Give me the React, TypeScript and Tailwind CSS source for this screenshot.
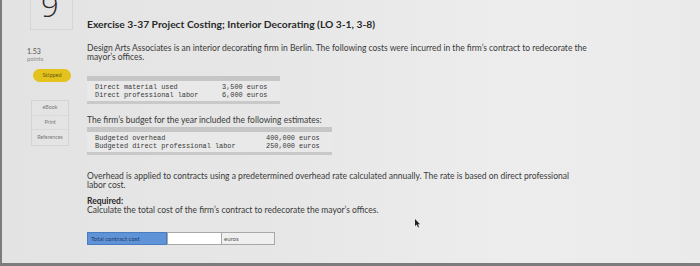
import React from "react";

const sans = { fontFamily: '"Lato", "Open Sans", sans-serif' };

function DataTable({ rows, width, numCol }: { rows: [string, string][]; width: string; numCol: string }) {
  return (
    <div className={`${width} flex flex-col`}>
      <div className="h-[5px] bg-[#c6c6c6]" />
      <div className="bg-[#e9e9e9] pt-[2px] pb-[2px] px-[8px] font-['Liberation_Mono',monospace] text-[6.9px] leading-[8px] text-[#3a3a3a]">
        {rows.map(([a, b]) => (
          <div key={a} className="flex">
            <span className="flex-1 whitespace-pre">{a}</span>
            <span className={`${numCol} whitespace-pre`}>{b}</span>
          </div>
        ))}
      </div>
      <div className="h-[3px] bg-[#c9c9c9]" />
    </div>
  );
}

export default function App() {
  return (
    <div
      className="relative w-[700px] h-[266px] overflow-hidden flex border-l-2 border-b-[3px] border-[#7c7c7c] bg-[linear-gradient(90deg,#e3e3e3_0%,#e7e7e7_40%,#ededed_75%,#eaeaea_100%)] text-[#333]"
      style={sans}
    >
      {/* Sidebar */}
      <div className="w-[85px] shrink-0 flex flex-col">
        <div className="ml-[28px] w-[43px] h-[30px] border-r border-b border-l border-[#d6d6d6] relative overflow-hidden">
          <span className="absolute left-[10px] top-[-10px] text-[31px] leading-[31px] font-light text-[#2a2a2a]" style={{ fontFamily: '"Open Sans", sans-serif' }}>9</span>
        </div>
        <div className="ml-[25px] mt-[17px] text-[7px] leading-[8px] text-[#555]">1.53</div>
        <div className="ml-[25px] text-[6px] leading-[8px] text-[#8a8a8a]">points</div>
        <div className="ml-[31px] mt-[6px] w-[38px] h-[13px] rounded-full bg-[#e4c21e] flex items-center justify-center text-[5.5px] text-[#6b5a08]">
          Skipped
        </div>
        <div className="ml-[29px] mt-[18px] w-[38px] flex flex-col border border-[#d4d4d4] text-[5.3px] text-[#7a7a7a]">
          <div className="h-[15px] flex items-center justify-center border-b border-[#d9d9d9]">eBook</div>
          <div className="h-[14px] flex items-center justify-center border-b border-[#d9d9d9]">Print</div>
          <div className="h-[15px] flex items-center justify-center">References</div>
        </div>
      </div>

      {/* Main */}
      <div className="flex flex-col pt-[17px]">
        <h1 className="text-[10.3px] leading-[14px] font-bold text-[#2a2a2a]">
          Exercise 3-37 Project Costing; Interior Decorating (LO 3-1, 3-8)
        </h1>
        <p className="mt-[13px] w-[512px] text-[8.5px] leading-[9px] text-[#3a3a3a]">
          Design Arts Associates is an interior decorating firm in Berlin. The following costs were incurred in the firm’s contract to redecorate the mayor’s offices.
        </p>
        <div className="mt-[14px]">
          <DataTable
            width="w-[193px]"
            numCol="w-[50px]"
            rows={[
              ["Direct material used", "3,500 euros"],
              ["Direct professional labor", "6,000 euros"],
            ]}
          />
        </div>
        <p className="mt-[12px] text-[8.5px] leading-[9px] text-[#3a3a3a]">
          The firm’s budget for the year included the following estimates:
        </p>
        <div className="mt-[2px]">
          <DataTable
            width="w-[245px]"
            numCol="w-[58px]"
            rows={[
              ["Budgeted overhead", "400,000 euros"],
              ["Budgeted direct professional labor", "250,000 euros"],
            ]}
          />
        </div>
        <p className="mt-[17px] w-[492px] text-[8.5px] leading-[9px] text-[#3a3a3a]">
          Overhead is applied to contracts using a predetermined overhead rate calculated annually. The rate is based on direct professional labor cost.
        </p>
        <p className="mt-[7px] text-[8.5px] leading-[9px] font-bold text-[#2a2a2a]">Required:</p>
        <p className="text-[8.5px] leading-[9px] text-[#3a3a3a]">
          Calculate the total cost of the firm’s contract to redecorate the mayor’s offices.
        </p>
        <div className="mt-[17px] flex h-[13px] text-[6px]">
          <div className="w-[80px] bg-[#5f93d8] border border-[#4a7cc0] flex items-center pl-[3px] text-[#1e3a66]">
            Total contract cost
          </div>
          <div className="w-[55px] bg-white border border-[#a8a8a8]" />
          <div className="w-[53px] bg-[#efefef] border border-[#a8a8a8] border-l-0 flex items-center pl-[2px] text-[#555]">
            euros
          </div>
        </div>
      </div>

      {/* cursor */}
      <svg className="absolute left-[413px] top-[219px]" width="6" height="9" viewBox="0 0 6 9">
        <path d="M0 0 L0 7 L1.8 5.5 L3 8.5 L4 8 L2.8 5.2 L5 5.2 Z" fill="#222" />
      </svg>
    </div>
  );
}
